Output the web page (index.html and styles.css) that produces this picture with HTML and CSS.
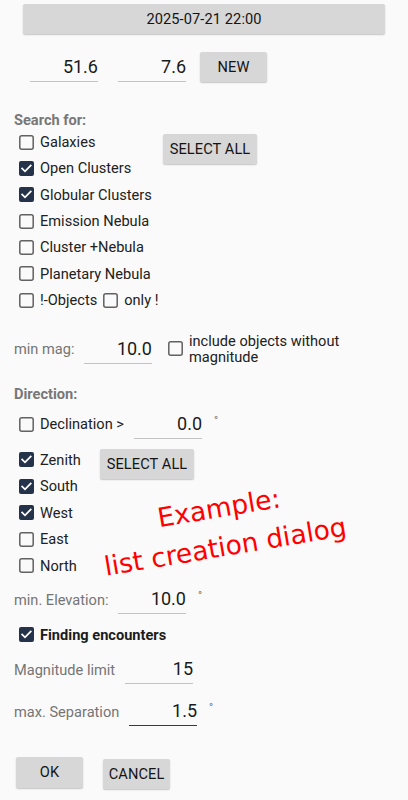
FILE: index.html
```html
<!DOCTYPE html>
<html>
<head>
<meta charset="utf-8">
<link rel="stylesheet" href="styles.css">
</head>
<body>
<div class="page">
  <div class="btn date-btn">2025-07-21 22:00</div>

  <div class="coords">
    <div class="field">51.6</div>
    <div class="field">7.6</div>
    <div class="btn new-btn">NEW</div>
  </div>

  <div class="heading h-search">Search for:</div>
  <div class="search">
    <div class="list list-search">
      <div class="cbrow"><svg class="cb" viewBox="0 0 15 15"><rect x="0.8" y="0.8" width="13.4" height="13.4" rx="2" class="box-off"/></svg><span>Galaxies</span></div>
      <div class="cbrow"><svg class="cb" viewBox="0 0 15 15"><rect x="0" y="0" width="15" height="15" rx="2" class="box-on"/><path d="M3.2 7.6 L6 10.3 L11.7 4.6" class="tick"/></svg><span>Open Clusters</span></div>
      <div class="cbrow"><svg class="cb" viewBox="0 0 15 15"><rect x="0" y="0" width="15" height="15" rx="2" class="box-on"/><path d="M3.2 7.6 L6 10.3 L11.7 4.6" class="tick"/></svg><span>Globular Clusters</span></div>
      <div class="cbrow"><svg class="cb" viewBox="0 0 15 15"><rect x="0.8" y="0.8" width="13.4" height="13.4" rx="2" class="box-off"/></svg><span>Emission Nebula</span></div>
      <div class="cbrow"><svg class="cb" viewBox="0 0 15 15"><rect x="0.8" y="0.8" width="13.4" height="13.4" rx="2" class="box-off"/></svg><span>Cluster +Nebula</span></div>
      <div class="cbrow"><svg class="cb" viewBox="0 0 15 15"><rect x="0.8" y="0.8" width="13.4" height="13.4" rx="2" class="box-off"/></svg><span>Planetary Nebula</span></div>
      <div class="cbrow"><svg class="cb" viewBox="0 0 15 15"><rect x="0.8" y="0.8" width="13.4" height="13.4" rx="2" class="box-off"/></svg><span>!-Objects</span><svg class="cb cb-second" viewBox="0 0 15 15"><rect x="0.8" y="0.8" width="13.4" height="13.4" rx="2" class="box-off"/></svg><span>only !</span></div>
    </div>
    <div class="btn select-btn select-search">SELECT ALL</div>
  </div>

  <div class="magrow">
    <span class="label lw-mag">min mag:</span>
    <div class="field">10.0</div>
    <svg class="cb cb-mag" viewBox="0 0 15 15"><rect x="0.8" y="0.8" width="13.4" height="13.4" rx="2" class="box-off"/></svg>
    <span class="wraptext"><span class="wline">include objects without</span><span class="wline">magnitude</span></span>
  </div>

  <div class="heading h-dir">Direction:</div>
  <div class="declrow">
    <svg class="cb" viewBox="0 0 15 15"><rect x="0.8" y="0.8" width="13.4" height="13.4" rx="2" class="box-off"/></svg>
    <span class="decl-label">Declination &gt;</span>
    <div class="field field-short">0.0</div>
    <span class="deg">°</span>
  </div>

  <div class="dirs">
    <div class="list list-dir">
      <div class="cbrow dirrow"><svg class="cb" viewBox="0 0 15 15"><rect x="0" y="0" width="15" height="15" rx="2" class="box-on"/><path d="M3.2 7.6 L6 10.3 L11.7 4.6" class="tick"/></svg><span>Zenith</span></div>
      <div class="cbrow dirrow"><svg class="cb" viewBox="0 0 15 15"><rect x="0" y="0" width="15" height="15" rx="2" class="box-on"/><path d="M3.2 7.6 L6 10.3 L11.7 4.6" class="tick"/></svg><span>South</span></div>
      <div class="cbrow dirrow"><svg class="cb" viewBox="0 0 15 15"><rect x="0" y="0" width="15" height="15" rx="2" class="box-on"/><path d="M3.2 7.6 L6 10.3 L11.7 4.6" class="tick"/></svg><span>West</span></div>
      <div class="cbrow dirrow"><svg class="cb" viewBox="0 0 15 15"><rect x="0.8" y="0.8" width="13.4" height="13.4" rx="2" class="box-off"/></svg><span>East</span></div>
      <div class="cbrow dirrow"><svg class="cb" viewBox="0 0 15 15"><rect x="0.8" y="0.8" width="13.4" height="13.4" rx="2" class="box-off"/></svg><span>North</span></div>
    </div>
    <div class="btn select-btn select-dir">SELECT ALL</div>
  </div>

  <div class="valrow row-elev">
    <span class="label lw-elev">min. Elevation:</span>
    <div class="field field-short">10.0</div>
    <span class="deg">°</span>
  </div>

  <div class="cbrow findrow"><svg class="cb" viewBox="0 0 15 15"><rect x="0" y="0" width="15" height="15" rx="2" class="box-on"/><path d="M3.2 7.6 L6 10.3 L11.7 4.6" class="tick"/></svg><span class="bold">Finding encounters</span></div>

  <div class="valrow row-maglim">
    <span class="label lw-maglim">Magnitude limit</span>
    <div class="field field-short">15</div>
  </div>

  <div class="valrow row-sep">
    <span class="label lw-sep">max. Separation</span>
    <div class="field field-short field-dark">1.5</div>
    <span class="deg">°</span>
  </div>

  <div class="actions">
    <div class="btn act-btn">OK</div>
    <div class="btn act-btn cancel">CANCEL</div>
  </div>

  <div class="stamp">Example:<br>list creation dialog</div>
</div>
</body>
</html>
```

FILE: styles.css
```css
* { box-sizing: border-box; }
html, body {
  margin: 0;
  padding: 0;
  background: #fafafa;
}
body {
  font-family: Roboto, "Noto Sans", "Liberation Sans", sans-serif;
  font-size: 14.6px;
  color: #212121;
}
.page {
  position: relative;
  width: 408px;
  height: 800px;
  overflow: hidden;
}

.btn {
  background: #d7d7d7;
  border-radius: 2px;
  box-shadow: 0 1px 1.5px rgba(0,0,0,0.22);
  display: flex;
  align-items: center;
  justify-content: center;
  font-size: 14.6px;
  color: #141414;
  letter-spacing: 0.1px;
}

.date-btn {
  margin: 4px 23px 0 23px;
  height: 30px;
  font-size: 14.6px;
}

.coords {
  display: flex;
  margin: 18px 0 0 30px;
  height: 30px;
}
.field {
  width: 68px;
  height: 30px;
  border-bottom: 1px solid #c2c2c2;
  display: flex;
  align-items: center;
  justify-content: flex-end;
  font-size: 18px;
  color: #1a1a1a;
  padding-bottom: 1px;
}
.coords .field + .field { margin-left: 20px; }
.new-btn {
  width: 67px;
  height: 30px;
  margin-left: 14px;
}

.heading {
  font-weight: 700;
  color: #777;
  font-size: 14.6px;
  line-height: 16px;
  padding-left: 14px;
}
.h-search { margin-top: 30px; }

.search {
  display: flex;
  margin-top: 1px;
  padding-left: 19px;
}
.list-search { width: 144px; }
.cbrow {
  display: flex;
  align-items: center;
  height: 26.33px;
  white-space: nowrap;
}
.cb {
  width: 15px;
  height: 15px;
  flex: none;
  margin-right: 6px;
}
.box-off { fill: none; stroke: #616161; stroke-width: 1.5; }
.box-on { fill: #243349; }
.tick { fill: none; stroke: #fff; stroke-width: 1.8; stroke-linecap: square; }
.cb-second { margin-left: 6px; }

.select-btn {
  width: 94px;
  height: 30px;
}
.select-search { margin-top: 5px; }

.magrow {
  display: flex;
  align-items: center;
  margin-top: 20px;
  height: 32px;
  padding-left: 14px;
}
.label {
  color: #757575;
  font-size: 14.6px;
  flex: none;
}
.lw-mag { width: 70px; }
.cb-mag { margin-left: 16px; margin-right: 6px; margin-top: -2px; }
.wraptext {
  display: flex;
  flex-direction: column;
}
.wline {
  display: block;
  height: 16px;
  line-height: 16px;
  font-size: 14.6px;
}

.h-dir { margin-top: 21px; }

.declrow {
  display: flex;
  align-items: center;
  height: 30px;
  margin-top: 7px;
  padding-left: 19px;
}
.decl-label { width: 94px; flex: none; }
.field-short { height: 29px; }
.deg {
  font-size: 11px;
  color: #666;
  margin-left: 12px;
  margin-bottom: 8px;
}

.dirs {
  display: flex;
  padding-left: 19px;
  margin-top: 7px;
}
.list-dir { width: 81px; }
.dirrow { height: 26.5px; }
.select-dir { margin-top: 3px; }

.valrow {
  display: flex;
  align-items: center;
  height: 30px;
  padding-left: 14px;
}
.row-elev { margin-top: 6px; }
.lw-elev { width: 104px; }
.lw-maglim { width: 111px; }
.lw-sep { width: 115px; }

.findrow {
  padding-left: 19px;
  height: 26px;
  margin-top: 7px;
}
.bold { font-weight: 700; color: #1c1c1c; }

.row-maglim { margin-top: 7px; }
.row-sep { margin-top: 12px; }
.field-dark { border-bottom-color: #3a3a3a; }

.actions {
  display: flex;
  align-items: flex-start;
  margin-top: 30px;
  padding-left: 16px;
}
.act-btn {
  width: 67px;
  height: 31px;
}
.cancel { margin-left: 20px; margin-top: 2px; height: 30px; }

.stamp {
  position: absolute;
  left: 222px;
  top: 527px;
  transform: translate(-50%, -50%) rotate(-9.5deg);
  font-family: "DejaVu Sans", Verdana, sans-serif;
  font-size: 26.5px;
  line-height: 39px;
  color: #ff0000;
  text-align: center;
  white-space: nowrap;
}
```
